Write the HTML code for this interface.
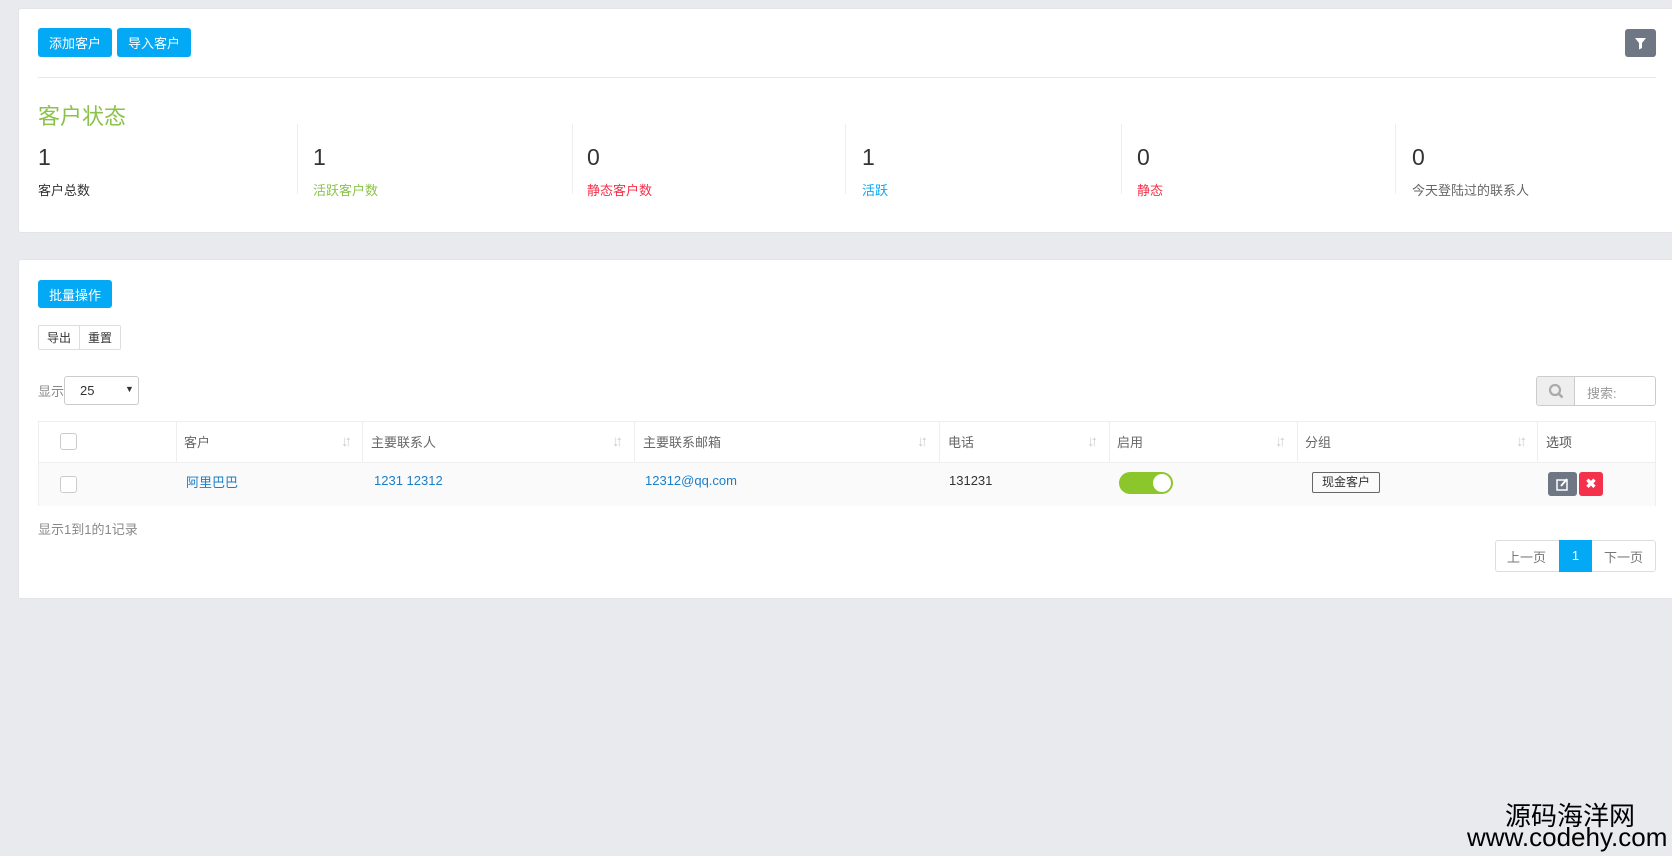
<!DOCTYPE html>
<html><head><meta charset="utf-8"><style>
*{box-sizing:border-box;margin:0;padding:0}
body{width:1672px;height:856px;background:#e9eaee;font-family:"Liberation Sans","Noto Sans CJK SC",sans-serif;font-size:13px;color:#333;position:relative;overflow:hidden}
.a{position:absolute}
.card{position:absolute;background:#fff;border:1px solid #e3e4e8;border-radius:3px}
.btn{position:absolute;background:#03a9f4;color:#fff;border-radius:3px;font-size:13px;display:flex;align-items:center;justify-content:center}
.num{position:absolute;top:144px;font-size:23px;color:#333}
.lbl{position:absolute;top:180px;font-size:13px}
.div{position:absolute;top:124px;height:70px;border-left:1px solid #eee}
.col{position:absolute;top:421px;height:41px;border-left:1px solid #eee}
.hd{position:absolute;top:432px;color:#666;font-size:13px}
.sort{position:absolute;top:433px;color:#ccc;font-size:15px;letter-spacing:-4px}
.cb{position:absolute;width:17px;height:17px;border:1px solid #ccc;border-radius:3px;background:#fff}
.lnk{color:#1b7ec9}
</style></head><body>
<div class="card" style="left:18px;top:8px;width:1670px;height:225px"></div>
<div class="btn" style="left:38px;top:28px;width:74px;height:29px">添加客户</div>
<div class="btn" style="left:117px;top:28px;width:74px;height:29px">导入客户</div>
<div class="a" style="left:1625px;top:29px;width:31px;height:28px;background:#6f7784;border-radius:3px">
<svg width="31" height="28"><path d="M10 9h11l-4 5v5l-3 1.5v-6.5z" fill="#fff"/></svg></div>
<div class="a" style="left:38px;top:77px;width:1618px;border-top:1px solid #e8e8e8"></div>
<div class="a" style="left:38px;top:99px;font-size:22px;color:#8bc34a">客户状态</div>
<div class="div" style="left:297px"></div><div class="div" style="left:572px"></div><div class="div" style="left:845px"></div><div class="div" style="left:1121px"></div><div class="div" style="left:1395px"></div>
<div class="num" style="left:38px">1</div><div class="lbl" style="left:38px;color:#333">客户总数</div>
<div class="num" style="left:313px">1</div><div class="lbl" style="left:313px;color:#8bc34a">活跃客户数</div>
<div class="num" style="left:587px">0</div><div class="lbl" style="left:587px;color:#f5304a">静态客户数</div>
<div class="num" style="left:862px">1</div><div class="lbl" style="left:862px;color:#03a9f4">活跃</div>
<div class="num" style="left:1137px">0</div><div class="lbl" style="left:1137px;color:#f5304a">静态</div>
<div class="num" style="left:1412px">0</div><div class="lbl" style="left:1412px;color:#666">今天登陆过的联系人</div>

<div class="card" style="left:18px;top:259px;width:1670px;height:340px"></div>
<div class="btn" style="left:38px;top:280px;width:74px;height:28px">批量操作</div>
<div class="a" style="left:38px;top:325px;width:83px;height:25px;border:1px solid #ddd;border-radius:2px;font-size:12px">
<span class="a" style="left:8px;top:3px">导出</span><span class="a" style="left:40px;top:0;height:23px;border-left:1px solid #ddd"></span><span class="a" style="left:49px;top:3px">重置</span></div>
<div class="a" style="left:38px;top:381px;color:#888">显示</div>
<div class="a" style="left:64px;top:376px;width:75px;height:29px;border:1px solid #ccc;border-radius:3px"><span class="a" style="left:15px;top:6px">25</span><span class="a" style="left:60px;top:7px;font-size:9px">▼</span></div>
<div class="a" style="left:1536px;top:376px;width:120px;height:30px;border:1px solid #ccc;border-radius:3px;overflow:hidden">
<div class="a" style="left:0;top:0;width:38px;height:28px;background:#eee;border-right:1px solid #ccc"><svg width="38" height="28"><circle cx="18" cy="13" r="5" stroke="#aaa" stroke-width="2.2" fill="none"/><path d="M21.5 16.5l4 4" stroke="#aaa" stroke-width="2.5"/></svg></div>
<span class="a" style="left:50px;top:6px;color:#999">搜索:</span></div>

<div class="a" style="left:38px;top:421px;width:1618px;height:85px;border:1px solid #eee"></div>
<div class="a" style="left:39px;top:462px;width:1616px;height:44px;background:#fafafa;border-top:1px solid #eee"></div>
<div class="col" style="left:176px"></div><div class="col" style="left:362px"></div><div class="col" style="left:634px"></div><div class="col" style="left:939px"></div><div class="col" style="left:1109px"></div><div class="col" style="left:1297px"></div><div class="col" style="left:1537px"></div>
<div class="cb" style="left:60px;top:433px"></div><div class="cb" style="left:60px;top:476px"></div>
<div class="hd" style="left:184px">客户</div><div class="sort" style="left:341px">↓↑</div>
<div class="hd" style="left:371px">主要联系人</div><div class="sort" style="left:612px">↓↑</div>
<div class="hd" style="left:643px">主要联系邮箱</div><div class="sort" style="left:917px">↓↑</div>
<div class="hd" style="left:948px">电话</div><div class="sort" style="left:1087px">↓↑</div>
<div class="hd" style="left:1117px">启用</div><div class="sort" style="left:1275px">↓↑</div>
<div class="hd" style="left:1305px">分组</div><div class="sort" style="left:1516px">↓↑</div>
<div class="hd" style="left:1546px;color:#555">选项</div>
<div class="a lnk" style="left:186px;top:472px">阿里巴巴</div>
<div class="a lnk" style="left:374px;top:473px">1231 12312</div>
<div class="a lnk" style="left:645px;top:473px">12312@qq.com</div>
<div class="a" style="left:949px;top:473px">131231</div>
<div class="a" style="left:1119px;top:472px;width:54px;height:22px;border-radius:11px;background:#8bc62a"><div class="a" style="left:34px;top:2px;width:18px;height:18px;border-radius:50%;background:#fff"></div></div>
<div class="a" style="left:1312px;top:472px;width:68px;height:21px;border:1px solid #666;border-radius:2px;font-size:12px;text-align:center;line-height:19px">现金客户</div>
<div class="a" style="left:1548px;top:472px;width:29px;height:24px;background:#6f7784;border-radius:3px"><svg width="29" height="24"><rect x="9" y="8" width="10" height="10" stroke="#fff" stroke-width="1.5" fill="none"/><path d="M13 14l6-7" stroke="#fff" stroke-width="2"/></svg></div>
<div class="a" style="left:1579px;top:472px;width:24px;height:24px;background:#f5304a;border-radius:3px;color:#fff;font-size:13px;font-weight:bold;text-align:center;line-height:24px">✖</div>
<div class="a" style="left:38px;top:519px;color:#888">显示1到1的1记录</div>
<div class="a" style="left:1495px;top:540px;width:161px;height:32px;border:1px solid #ddd;border-radius:3px;color:#777">
<span class="a" style="left:11px;top:6px">上一页</span>
<div class="a" style="left:63px;top:-1px;width:33px;height:32px;background:#03a9f4;color:#fff;text-align:center;line-height:32px">1</div>
<span class="a" style="left:108px;top:6px">下一页</span></div>
<div class="a" style="left:1505px;top:796px;font-size:26px;color:#000">源码海洋网</div>
<div class="a" style="left:1467px;top:822px;font-size:26px;color:#000">www.codehy.com</div>
</body></html>
